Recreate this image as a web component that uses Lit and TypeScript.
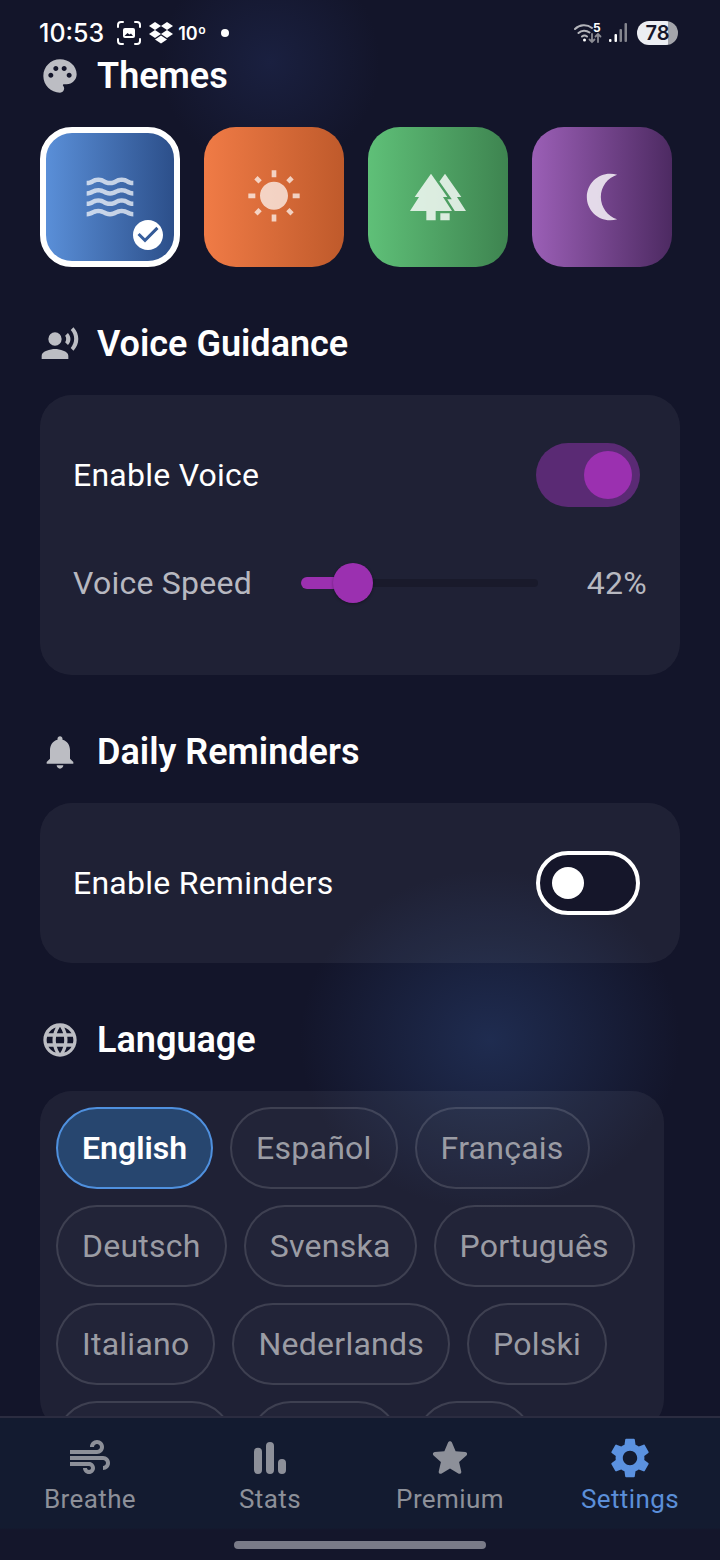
import { LitElement, html, css, svg } from "lit";
import { customElement } from "lit/decorators.js";

const P = {
  palette: "M12 2C6.49 2 2 6.49 2 12s4.49 10 10 10c1.38 0 2.5-1.12 2.5-2.5 0-.61-.23-1.2-.64-1.67-.08-.1-.13-.21-.13-.33 0-.28.22-.5.5-.5H16c3.31 0 6-2.69 6-6 0-4.96-4.49-9-10-9zm5.5 11c-.83 0-1.5-.67-1.5-1.5s.67-1.5 1.5-1.5 1.5.67 1.5 1.5-.67 1.5-1.5 1.5zm-3-4c-.83 0-1.5-.67-1.5-1.5S13.67 6 14.5 6s1.5.67 1.5 1.5S15.33 9 14.5 9zM5 11.5c0-.83.67-1.5 1.5-1.5s1.5.67 1.5 1.5S7.33 13 6.5 13 5 12.33 5 11.5zm6-4c0 .83-.67 1.5-1.5 1.5S8 8.33 8 7.5 8.67 6 9.5 6s1.5.67 1.5 1.5z",
  voice: "M9 5a4 4 0 1 0 0 8 4 4 0 0 0 0-8zM9 15c-2.67 0-8 1.34-8 4v2h16v-2c0-2.66-5.33-4-8-4zm7.76-9.64l-1.68 1.69c.84 1.18.84 2.71 0 3.89l1.68 1.69c2.02-2.02 2.02-5.07 0-7.27zM20.07 2l-1.63 1.63c2.77 3.02 2.77 7.56 0 10.74L20.07 16c3.9-3.89 3.91-9.95 0-14z",
  bell: "M12 22c1.1 0 2-.9 2-2h-4c0 1.1.89 2 2 2zm6-6v-5c0-3.07-1.64-5.64-4.5-6.32V4c0-.83-.67-1.5-1.5-1.5s-1.5.67-1.5 1.5v.68C7.63 5.36 6 7.92 6 11v5l-2 2v1h16v-1l-2-2z",
  globe: "M11.99 2C6.47 2 2 6.48 2 12s4.47 10 9.99 10C17.52 22 22 17.52 22 12S17.52 2 11.99 2zm6.93 6h-2.95c-.32-1.25-.78-2.45-1.38-3.56 1.84.63 3.37 1.91 4.33 3.56zM12 4.04c.83 1.2 1.48 2.53 1.91 3.96h-3.82c.43-1.43 1.08-2.76 1.91-3.96zM4.26 14C4.1 13.36 4 12.69 4 12s.1-1.36.26-2h3.38c-.08.66-.14 1.32-.14 2 0 .68.06 1.34.14 2H4.26zm.82 2h2.95c.32 1.25.78 2.45 1.38 3.56-1.84-.63-3.37-1.9-4.33-3.56zm2.95-8H5.08c.96-1.66 2.49-2.93 4.33-3.56C8.81 5.55 8.35 6.75 8.03 8zM12 19.96c-.83-1.2-1.48-2.53-1.91-3.96h3.82c-.43 1.43-1.08 2.76-1.91 3.96zM14.34 14H9.66c-.09-.66-.16-1.32-.16-2 0-.68.07-1.35.16-2h4.68c.09.65.16 1.32.16 2 0 .68-.07 1.34-.16 2zm.25 5.56c.6-1.11 1.06-2.31 1.38-3.56h2.95c-.96 1.65-2.49 2.93-4.33 3.56zM16.36 14c.08-.66.14-1.32.14-2 0-.68-.06-1.34-.14-2h3.38c.16.64.26 1.31.26 2s-.1 1.36-.26 2h-3.38z",
  waves: "M17 16.99c-1.35 0-2.2.42-2.95.8-.65.33-1.18.6-2.05.6-.9 0-1.4-.25-2.05-.6-.75-.38-1.57-.8-2.95-.8s-2.2.42-2.95.8c-.65.33-1.17.6-2.05.6v1.95c1.35 0 2.2-.42 2.95-.8.65-.33 1.17-.6 2.05-.6s1.4.25 2.05.6c.75.38 1.57.8 2.95.8s2.2-.42 2.95-.8c.65-.33 1.18-.6 2.05-.6.9 0 1.4.25 2.05.6.75.38 1.58.8 2.95.8v-1.95c-.9 0-1.4-.25-2.05-.6-.75-.38-1.6-.8-2.95-.8zm0-4.45c-1.35 0-2.2.43-2.95.8-.65.32-1.18.6-2.05.6-.9 0-1.4-.25-2.05-.6-.75-.38-1.57-.8-2.95-.8s-2.2.43-2.95.8c-.65.32-1.17.6-2.05.6v1.95c1.35 0 2.2-.43 2.95-.8.65-.35 1.15-.6 2.05-.6s1.4.25 2.05.6c.75.38 1.57.8 2.95.8s2.2-.43 2.95-.8c.65-.35 1.15-.6 2.05-.6s1.4.25 2.05.6c.75.38 1.58.8 2.95.8v-1.95c-.9 0-1.4-.25-2.05-.6-.75-.38-1.6-.8-2.95-.8zm2.95-8.08c-.75-.38-1.58-.8-2.95-.8s-2.2.42-2.95.8c-.65.32-1.18.6-2.05.6-.9 0-1.4-.25-2.05-.6-.75-.37-1.57-.8-2.95-.8s-2.2.42-2.95.8c-.65.33-1.17.6-2.05.6v1.93c1.35 0 2.2-.43 2.95-.8.65-.33 1.17-.6 2.05-.6s1.4.25 2.05.6c.75.38 1.57.8 2.95.8s2.2-.43 2.95-.8c.65-.32 1.18-.6 2.05-.6.9 0 1.4.25 2.05.6.75.38 1.58.8 2.95.8V5.04c-.9 0-1.4-.25-2.05-.58zM17 8.09c-1.35 0-2.2.43-2.95.8-.65.35-1.15.6-2.05.6s-1.4-.25-2.05-.6c-.75-.38-1.57-.8-2.95-.8s-2.2.43-2.95.8c-.65.35-1.15.6-2.05.6v1.95c1.35 0 2.2-.43 2.95-.8.65-.32 1.18-.6 2.05-.6s1.4.25 2.05.6c.75.38 1.57.8 2.95.8s2.2-.43 2.95-.8c.65-.32 1.18-.6 2.05-.6.9 0 1.4.25 2.05.6.75.38 1.58.8 2.95.8V9.49c-.9 0-1.4-.25-2.05-.6-.75-.38-1.6-.8-2.95-.8z",
  sun: "M6.76 4.84l-1.8-1.79-1.41 1.41 1.79 1.79 1.42-1.41zM4 10.5H1v2h3v-2zm9-9.95h-2V3.5h2V.55zm7.45 3.91l-1.41-1.41-1.79 1.79 1.41 1.41 1.79-1.79zm-3.21 13.7l1.79 1.8 1.41-1.41-1.8-1.79-1.4 1.4zM20 10.5v2h3v-2h-3zm-8-5c-3.31 0-6 2.69-6 6s2.69 6 6 6 6-2.69 6-6-2.69-6-6-6zm-1 16.95h2V19.5h-2v2.95zm-7.45-3.91l1.41 1.41 1.79-1.8-1.41-1.41-1.79 1.8z",
  forest: "M16 12L9 2 2 12h1.86L0 18h7v4h4v-4h7l-3.86-6zM20.14 12H22L15 2l-2.39 3.41L17.92 13h-1.95l3.22 5H24zM13 19h4v3h-4z",
  moon: "M15.5 22c1.05 0 2.05-.16 3-.46-4.06-1.27-7-5.06-7-9.54 0-4.48 2.94-8.27 7-9.54-.95-.3-1.95-.46-3-.46-5.52 0-10 4.48-10 10s4.48 10 10 10z",
  check: "M12 2C6.48 2 2 6.48 2 12s4.48 10 10 10 10-4.48 10-10S17.52 2 12 2zm-2 15l-5-5 1.41-1.41L10 14.17l7.59-7.59L19 8l-9 9z",
  air: "M14.5 17c0 1.65-1.35 3-3 3s-3-1.35-3-3h2c0 .55.45 1 1 1s1-.45 1-1-.45-1-1-1H2v-2h9.5c1.65 0 3 1.35 3 3zM19 6.5C19 4.57 17.43 3 15.5 3S12 4.57 12 6.5h2c0-.83.67-1.5 1.5-1.5s1.5.67 1.5 1.5S16.33 8 15.5 8H2v2h13.5c1.93 0 3.5-1.57 3.5-3.5zm-.5 4.5H2v2h16.5c.83 0 1.5.67 1.5 1.5s-.67 1.5-1.5 1.5v2c1.93 0 3.5-1.57 3.5-3.5S20.43 11 18.5 11z",
  bars: "M4 8.85a2 2 0 0 1 2-2h0a2 2 0 0 1 2 2V18a2 2 0 0 1-2 2h0a2 2 0 0 1-2-2zM10 6a2 2 0 0 1 4 0v12a2 2 0 0 1-4 0zM16 14.5a2 2 0 0 1 4 0V18a2 2 0 0 1-4 0z",
  star: "M12 17.27l4.15 2.51c.76.46 1.69-.22 1.49-1.08l-1.1-4.72 3.67-3.18c.67-.58.31-1.68-.57-1.75l-4.83-.41-1.89-4.46c-.34-.81-1.5-.81-1.84 0L9.19 8.63l-4.83.41c-.88.07-1.24 1.17-.57 1.75l3.67 3.18-1.1 4.72c-.2.86.73 1.54 1.49 1.08l4.15-2.5z",
  gear: "M19.14 12.94c.04-.3.06-.61.06-.94 0-.32-.02-.64-.07-.94l2.03-1.58c.18-.14.23-.41.12-.61l-1.92-3.32c-.12-.22-.37-.29-.59-.22l-2.39.96c-.5-.38-1.03-.7-1.62-.94l-.36-2.54c-.04-.24-.24-.41-.48-.41h-3.84c-.24 0-.43.17-.47.41l-.36 2.54c-.59.24-1.13.57-1.62.94l-2.39-.96c-.22-.08-.47 0-.59.22L2.74 8.87c-.12.21-.08.47.12.61l2.03 1.58c-.05.3-.09.63-.09.94s.02.64.07.94l-2.03 1.58c-.18.14-.23.41-.12.61l1.92 3.32c.12.22.37.29.59.22l2.39-.96c.5.38 1.03.7 1.62.94l.36 2.54c.05.24.24.41.48.41h3.84c.24 0 .44-.17.47-.41l.36-2.54c.59-.24 1.13-.56 1.62-.94l2.39.96c.22.08.47 0 .59-.22l1.92-3.32c.12-.22.07-.47-.12-.61l-2.01-1.58zM12 15.6c-1.98 0-3.6-1.62-3.6-3.6s1.62-3.6 3.6-3.6 3.6 1.62 3.6 3.6-1.62 3.6-3.6 3.6z",
};

const icon = (d: string, size: number, cls = "") =>
  html`<svg class=${cls} width=${size} height=${size} viewBox="0 0 24 24" fill="currentColor"><path d=${d}></path></svg>`;

const LANGS = [
  ["English", "Español", "Français"],
  ["Deutsch", "Svenska", "Português"],
  ["Italiano", "Nederlands", "Polski"],
  ["Русский", "Türkçe", "中文"],
];

@customElement("app-root")
export class AppRoot extends LitElement {
  static styles = css`
    :host {
      display: flex;
      flex-direction: column;
      position: relative;
      width: 720px;
      height: 1560px;
      overflow: hidden;
      font-family: Roboto, "Noto Sans CJK SC", sans-serif;
      color: #fff;
      background:
        radial-gradient(circle 110px at 270px 62px, #1a2040 0%, rgba(26, 32, 64, 0) 100%),
        radial-gradient(ellipse 190px 170px at 490px 1040px, #1f2c50 0%, rgba(31, 44, 80, 0) 100%),
        #13152a;
    }
    svg { display: block; flex: none; }

    /* status bar */
    .status {
      position: absolute;
      left: 0; right: 0; top: 19px;
      height: 28px;
      display: flex;
      align-items: center;
      padding: 0 42px 0 39px;
      font-family: Inter, sans-serif;
    }
    .time { font-size: 25px; font-weight: 500; letter-spacing: 0; }
    .sb-shot { margin-left: 12px; }
    .sb-drop { margin-left: 6px; }
    .temp { font-size: 18px; font-weight: 600; margin-left: 4px; }
    .dot { width: 8px; height: 8px; border-radius: 50%; background: #fff; margin-left: 15px; }
    .sb-right { margin-left: auto; display: flex; align-items: center; }
    .batt {
      width: 41px; height: 24px; border-radius: 12px; margin-left: 9px;
      background: linear-gradient(90deg, #eceef3 0 76%, #a4a5ab 76%);
      color: #15162a; font-size: 20px; font-weight: 600;
      display: flex; align-items: center; justify-content: center;
    }

    /* content */
    main { height: 1416px; flex: none; overflow: hidden; padding: 55px 40px 0; box-sizing: border-box; }
    .head { display: flex; align-items: center; gap: 17px; height: 42px; margin-bottom: 30px; }
    .head svg { color: #bcbdc3; }
    h2 { margin: 0; font-size: 36px; line-height: 42px; font-weight: 600; color: #fff; }

    .tiles { display: flex; gap: 24px; margin-bottom: 56px; }
    .tile {
      position: relative;
      width: 140px; height: 140px;
      box-sizing: border-box;
      border-radius: 32px;
      display: flex; align-items: center; justify-content: center;
    }
    .tile svg { color: rgba(255, 255, 255, 0.7); }
    .tile.sel { border: 6px solid #fff; }
    .t-blue { background: linear-gradient(90deg, #5a8fd8, #2c4f8a); }
    .t-orange { background: linear-gradient(90deg, #f07b46, #bf5a2b); }
    .t-green { background: linear-gradient(90deg, #5fc078, #3e8450); }
    .t-purple { background: linear-gradient(90deg, #9b5fb6, #4d2a62); }
    .tile svg.solid { color: rgba(255, 255, 255, 0.8); }
    .tile svg.badge { position: absolute; right: 8px; bottom: 8px; color: #fff; }

    .card {
      background: rgba(255, 255, 255, 0.055);
      border-radius: 32px;
      padding: 0 33px;
      margin-bottom: 56px;
    }
    .row { display: flex; align-items: center; justify-content: space-between; font-size: 32px; line-height: 40px; letter-spacing: 0.25px; }
    .voice { height: 280px; padding-top: 48px; padding-bottom: 48px; box-sizing: border-box; display: flex; flex-direction: column; gap: 56px; }
    .remind { height: 160px; padding-top: 48px; box-sizing: border-box; }
    .sw { width: 104px; height: 64px; border-radius: 32px; box-sizing: border-box; display: flex; align-items: center; margin-right: 7px; }
    .sw.on { background: #5a2a74; justify-content: flex-end; padding-right: 8px; }
    .sw.on i { width: 48px; height: 48px; border-radius: 50%; background: #9b30b0; display: block; }
    .sw.off { border: 4px solid #fff; padding-left: 12px; background: #15162a; }
    .sw.off i { width: 32px; height: 32px; border-radius: 50%; background: #fff; display: block; }

    .speed { color: #b7b8c0; justify-content: flex-start; gap: 49px; }
    .slider { flex: 1; position: relative; height: 8px; border-radius: 4px; background: #191a2b; }
    .slider .fill { position: absolute; left: 0; top: -2px; height: 12px; width: 52px; border-radius: 6px 0 0 6px; background: #9b30b0; }
    .slider .thumb { position: absolute; left: 32px; top: -16px; width: 40px; height: 40px; border-radius: 50%; background: #9b30b0; box-shadow: 0 1px 3px rgba(0, 0, 0, 0.35); }

    .langs {
      margin-right: 16px;
      padding: 16px;
      height: 340px;
      margin-bottom: 0;
      box-sizing: border-box;
      display: flex;
      flex-direction: column;
      gap: 16px;
    }
    .lrow { display: flex; gap: 17px; }
    .chip {
      height: 82px;
      box-sizing: border-box;
      border: 2px solid rgba(255, 255, 255, 0.13);
      border-radius: 41px;
      padding: 0 24px;
      display: flex; align-items: center;
      font-size: 32px; letter-spacing: 0.25px;
      color: #9b9ca4;
      background: rgba(255, 255, 255, 0.015);
    }
    .chip.sel { background: #27466f; border-color: #4f90de; color: #fff; font-weight: 600; letter-spacing: 0; }

    /* bottom nav */
    nav {
      flex: none;
      height: 144px;
      box-sizing: border-box;
      border-top: 2px solid #2b2c40;
      background: linear-gradient(180deg, #131b30 0 110px, #14162b 112px);
      display: flex;
      align-items: flex-start;
      position: relative;
    }
    .tab { width: 180px; display: flex; flex-direction: column; align-items: center; padding-top: 16px; color: #8d9099; font-size: 26px; line-height: 32px; letter-spacing: 0.4px; gap: 1px; }
    .tab.active { color: #5b8fd9; }
    .tab.active svg { color: #5b92e0; }
    .home { position: absolute; left: 234px; top: 123px; width: 252px; height: 8px; border-radius: 4px; background: #7a7b88; }
  `;

  render() {
    return html`
      <main>
        <div class="head">${icon(P.palette, 40)}<h2>Themes</h2></div>
        <div class="tiles">
          <div class="tile t-blue sel">${icon(P.waves, 56)}${icon(P.check, 36, "badge")}</div>
          <div class="tile t-orange">${icon(P.sun, 56)}</div>
          <div class="tile t-green">${icon(P.forest, 56, "solid")}</div>
          <div class="tile t-purple">${icon(P.moon, 56, "solid")}</div>
        </div>

        <div class="head">${icon(P.voice, 40)}<h2>Voice Guidance</h2></div>
        <div class="card voice">
          <div class="row"><span>Enable Voice</span><div class="sw on"><i></i></div></div>
          <div class="row speed">
            <span>Voice Speed</span>
            <div class="slider"><div class="fill"></div><div class="thumb"></div></div>
            <span>42%</span>
          </div>
        </div>

        <div class="head">${icon(P.bell, 40)}<h2>Daily Reminders</h2></div>
        <div class="card remind">
          <div class="row"><span>Enable Reminders</span><div class="sw off"><i></i></div></div>
        </div>

        <div class="head">${icon(P.globe, 40)}<h2>Language</h2></div>
        <div class="card langs">
          ${LANGS.map(
            (r, ri) => html`<div class="lrow">
              ${r.map((l, i) => html`<div class="chip ${ri === 0 && i === 0 ? "sel" : ""}">${l}</div>`)}
            </div>`
          )}
        </div>
      </main>

      <nav>
        <div class="tab">${icon(P.air, 48)}<span>Breathe</span></div>
        <div class="tab">${icon(P.bars, 48)}<span>Stats</span></div>
        <div class="tab">${icon(P.star, 48)}<span>Premium</span></div>
        <div class="tab active">${icon(P.gear, 48)}<span>Settings</span></div>
        <div class="home"></div>
      </nav>

      <div class="status">
        <span class="time">10:53</span>
        <svg class="sb-shot" width="26" height="26" viewBox="0 0 26 26" fill="none" stroke="#fff" stroke-width="2" stroke-linecap="round">
          <path d="M7 2H5a3 3 0 0 0-3 3v2M19 2h2a3 3 0 0 1 3 3v2M7 24H5a3 3 0 0 1-3-3v-2M19 24h2a3 3 0 0 0 3-3v-2"></path>
          <rect x="7" y="8" width="12" height="10" rx="2" fill="#fff" stroke="none"></rect>
          <path d="M8.5 16l3-3 2 1.6 1.5-1 2 2.4z" fill="#13152a" stroke="none"></path>
        </svg>
        <svg class="sb-drop" width="26" height="24" viewBox="0 0 26 24" fill="#fff">
          <path d="M7 1L1 5l6 4-6 4 6 4 6-4 6 4 6-4-6-4 6-4-6-4-6 4zM13 5l6 4-6 4-6-4zM7 18.6l6 4 6-4-6-4z"></path>
        </svg>
        <span class="temp">10º</span>
        <span class="dot"></span>
        <div class="sb-right">
          <svg width="28" height="24" viewBox="0 0 28 24" fill="none" stroke="#a9aab0" stroke-width="2" stroke-linecap="round">
            <path d="M1 8a13 13 0 0 1 17-1M4.500 12a8.500 8.500 0 0 1 11-.500M8 15.500a4 4 0 0 1 5 0" stroke="#b4b5bb"></path>
            <circle cx="10.500" cy="19" r="1.500" fill="#fff" stroke="none"></circle>
            <path d="M18 13v8M15.500 18.500L18 21l2.500-2.500M24 21v-8M21.500 15.500L24 13l2.500 2.500" stroke="#8b8c94" stroke-width="1.800"></path>
            <text x="19" y="11" font-size="12" font-weight="700" fill="#fff" stroke="none" font-family="Inter, sans-serif">5</text>
          </svg>
          <svg style="margin-left:6px" width="20" height="22" viewBox="0 0 20 22" fill="#fff">
            <rect x="1" y="17" width="2.500" height="3" rx="1"></rect>
            <rect x="6.500" y="12" width="2.500" height="8" rx="1"></rect>
            <rect x="11.500" y="7" width="2.500" height="13" rx="1" fill="#85868e"></rect>
            <rect x="16.500" y="1" width="2.500" height="19" rx="1" fill="#85868e"></rect>
          </svg>
          <div class="batt">78</div>
        </div>
      </div>
    `;
  }
}
void svg;
